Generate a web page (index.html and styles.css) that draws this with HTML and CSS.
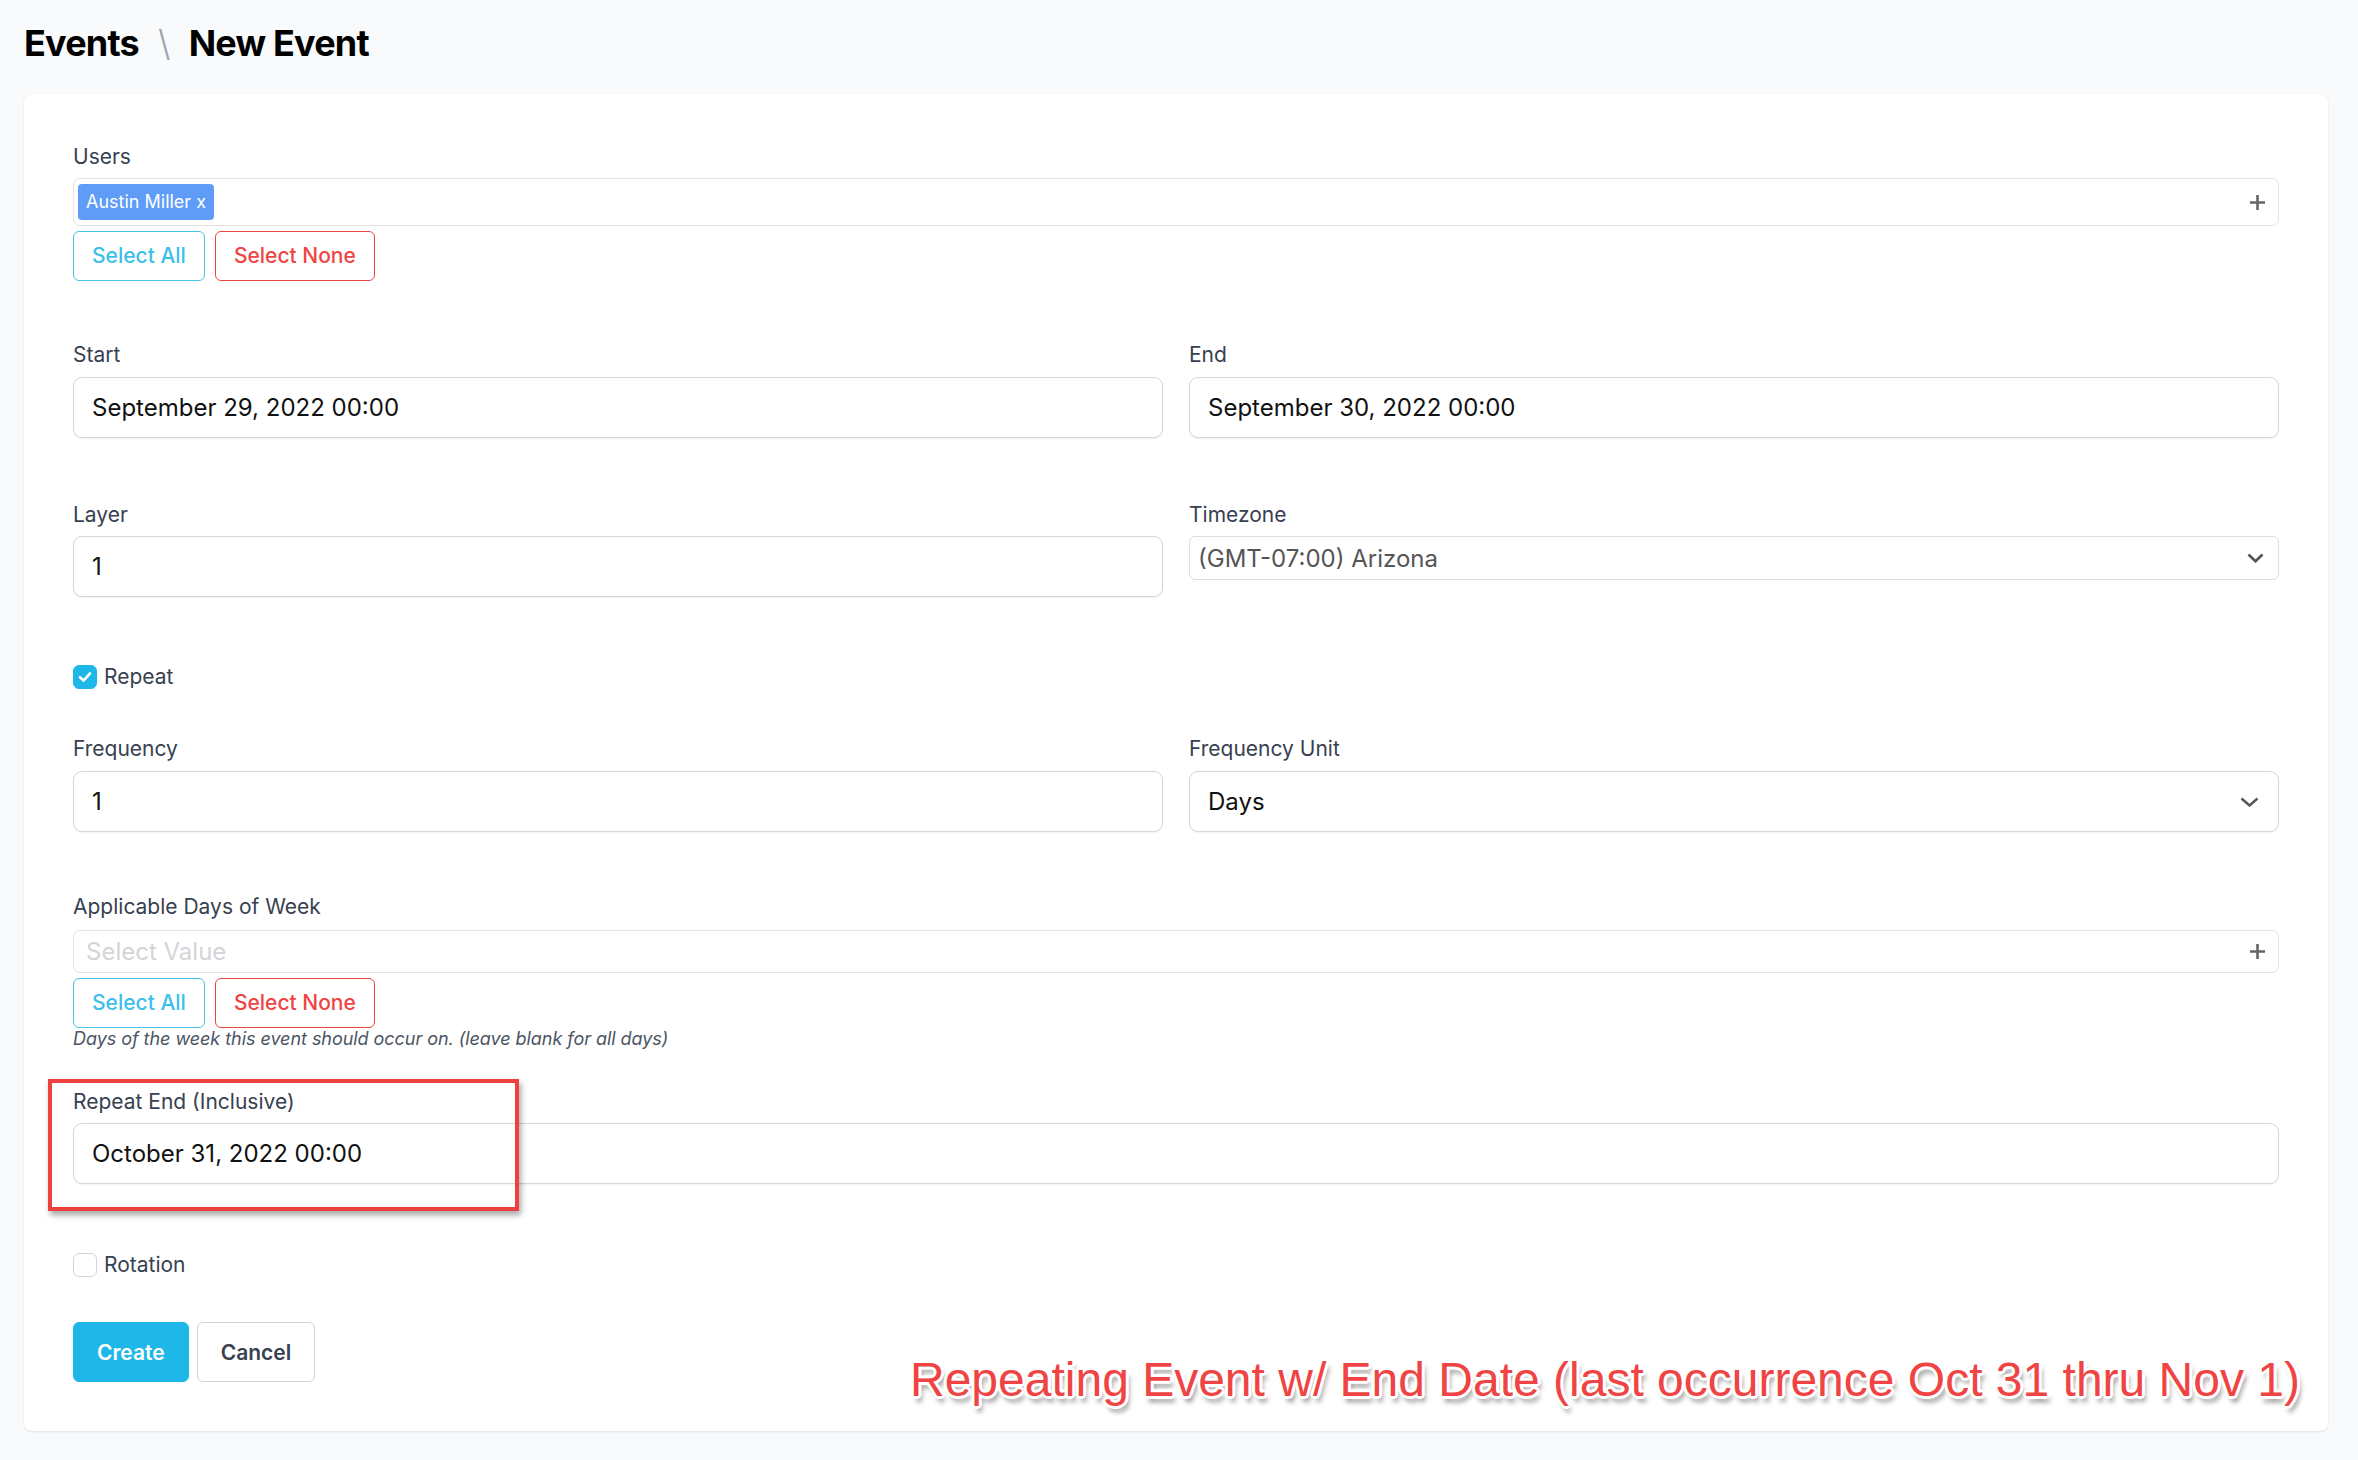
FILE: index.html
```html
<!DOCTYPE html>
<html lang="en">
<head>
<meta charset="utf-8">
<title>New Event</title>
<link rel="stylesheet" href="styles.css">
</head>
<body>
<div class="page">
  <h1 class="crumbs"><span>Events</span><span class="sep">\</span><span>New Event</span></h1>
  <div class="card">
    <div class="field users">
      <div class="lbl">Users</div>
      <div class="multi">
        <span class="tag">Austin Miller x</span>
        <svg class="plus" width="15" height="15" viewBox="0 0 15 15"><path d="M7.5 0v15M0 7.5h15" stroke="#666" stroke-width="2.6" fill="none"/></svg>
      </div>
      <div class="btns">
        <button class="obtn cyan">Select All</button>
        <button class="obtn red">Select None</button>
      </div>
    </div>

    <div class="row2 r-start">
      <div class="col">
        <div class="lbl">Start</div>
        <div class="input">September 29, 2022 00:00</div>
      </div>
      <div class="col">
        <div class="lbl">End</div>
        <div class="input">September 30, 2022 00:00</div>
      </div>
    </div>

    <div class="row2 r-layer">
      <div class="col">
        <div class="lbl">Layer</div>
        <div class="input">1</div>
      </div>
      <div class="col">
        <div class="lbl">Timezone</div>
        <div class="tzselect">
          <span>(GMT-07:00) Arizona</span>
          <svg width="17" height="10" viewBox="0 0 17 10"><polyline points="1.5,1.5 8.5,8.3 15.5,1.5" stroke="#555" stroke-width="2.6" fill="none"/></svg>
        </div>
      </div>
    </div>

    <div class="check-row r-repeat">
      <span class="cb on"><svg width="14" height="12" viewBox="0 0 14 12"><polyline points="2,6.2 5.6,9.6 12,2.4" stroke="#fff" stroke-width="2.6" fill="none" stroke-linecap="round" stroke-linejoin="round"/></svg></span>
      <span>Repeat</span>
    </div>

    <div class="row2 r-freq">
      <div class="col">
        <div class="lbl">Frequency</div>
        <div class="input">1</div>
      </div>
      <div class="col">
        <div class="lbl">Frequency Unit</div>
        <div class="input sel">
          <span>Days</span>
          <svg width="19" height="10" viewBox="0 0 19 10"><polyline points="1.5,1.5 9.5,8.5 17.5,1.5" stroke="#555" stroke-width="2.4" fill="none"/></svg>
        </div>
      </div>
    </div>

    <div class="field r-days">
      <div class="lbl">Applicable Days of Week</div>
      <div class="multi days">
        <span class="ph">Select Value</span>
        <svg class="plus" width="15" height="15" viewBox="0 0 15 15"><path d="M7.5 0v15M0 7.5h15" stroke="#666" stroke-width="2.6" fill="none"/></svg>
      </div>
      <div class="btns">
        <button class="obtn cyan">Select All</button>
        <button class="obtn red">Select None</button>
      </div>
      <div class="help">Days of the week this event should occur on. (leave blank for all days)</div>
    </div>

    <div class="field r-end">
      <div class="lbl">Repeat End (Inclusive)</div>
      <div class="input">October 31, 2022 00:00</div>
      <div class="highlight"></div>
    </div>

    <div class="check-row r-rot">
      <span class="cb"></span>
      <span>Rotation</span>
    </div>

    <div class="actions">
      <button class="btn primary">Create</button>
      <button class="btn plain">Cancel</button>
    </div>

    <div class="annotation">Repeating Event w/ End Date (last occurrence Oct 31 thru Nov 1)</div>
  </div>
</div>
</body>
</html>
```

FILE: styles.css
```css
* { box-sizing: border-box; }
html, body { margin: 0; padding: 0; }
body {
  background: #f9fafb;
  font-family: Inter, "Noto Sans", "Liberation Sans", sans-serif;
  color: #111827;
}
.page {
  padding: 16px 30px 29px 24px;
}
.crumbs {
  margin: 0 0 24px 0;
  font-size: 36px;
  line-height: 54px;
  font-weight: 700;
  color: #000;
  letter-spacing: -0.8px;
  display: flex;
  align-items: center;
}
.crumbs .sep {
  font-weight: 300;
  color: #9ca3af;
  margin: 0 19px 0 19px;
}
.card {
  position: relative;
  background: #fff;
  border-radius: 8px;
  box-shadow: 0 1px 3px rgba(0,0,0,0.07), 0 1px 2px rgba(0,0,0,0.04);
  padding: 48px 49px 48px 49px;
  height: 1337px;
}
.lbl {
  font-size: 21px;
  line-height: 30px;
  color: #374151;
  margin-bottom: 6px;
}
.multi {
  height: 48px;
  border: 1px solid #e2e2e2;
  border-radius: 7px;
  display: flex;
  align-items: center;
  justify-content: space-between;
  padding: 0 13px 0 4px;
}
.tag {
  background: #5e9cf8;
  color: #fff;
  font-size: 18px;
  line-height: 28px;
  padding: 4px 8px;
  border-radius: 4px;
}
.multi.days {
  height: 43px;
  padding-left: 12px;
}
.ph {
  font-size: 24px;
  color: #d4d4d8;
}
.btns {
  display: flex;
  gap: 10px;
  margin-top: 5px;
}
.obtn {
  font-family: inherit;
  font-size: 21px;
  font-weight: 500;
  line-height: 30px;
  padding: 9px 18px;
  background: #fff;
  border-radius: 6px;
  border: 1px solid;
}
.obtn.cyan { color: #3dbfe9; border-color: #45c3ec; }
.obtn.red { color: #ef4444; border-color: #ef4444; }

.row2 {
  display: grid;
  grid-template-columns: 1fr 1fr;
  column-gap: 26px;
  align-items: start;
}
.r-start { margin-top: 59px; }
.r-start .lbl { margin-bottom: 7px; }
.r-layer { margin-top: 62px; }
.r-freq { margin-top: 42px; }
.r-freq .lbl { margin-bottom: 7px; }

.input {
  height: 61px;
  border: 1px solid #d4d5db;
  border-radius: 9px;
  box-shadow: 0 1px 2px rgba(0,0,0,0.06);
  padding: 0 18px;
  display: flex;
  align-items: center;
  font-size: 24px;
  color: #111;
}
.input.sel {
  justify-content: space-between;
  padding-right: 19px;
}
.tzselect {
  height: 44px;
  border: 1px solid #dddddd;
  border-radius: 6px;
  padding: 0 14px 0 8px;
  display: flex;
  align-items: center;
  justify-content: space-between;
  font-size: 24px;
  color: #555;
}

.check-row {
  display: flex;
  align-items: center;
  gap: 7px;
  font-size: 21px;
  line-height: 30px;
  color: #374151;
}
.r-repeat { margin-top: 65px; }
.r-rot { margin-top: 66px; }
.cb {
  width: 24px;
  height: 24px;
  border-radius: 6px;
  border: 1px solid #d1d5db;
  background: #fff;
  display: inline-flex;
  align-items: center;
  justify-content: center;
}
.cb.on {
  background: #1fb7e7;
  border-color: #1fb7e7;
}

.r-days { margin-top: 60px; }
.r-days .lbl { margin-bottom: 8px; }
.help {
  margin-top: 1px;
  font-size: 18px;
  line-height: 20px;
  font-style: italic;
  color: #4b5563;
  letter-spacing: -0.05px;
}

.r-end {
  position: relative;
  margin-top: 38px;
}
.highlight {
  position: absolute;
  left: -25px;
  top: -8px;
  width: 471px;
  height: 132px;
  border: 4px solid #ef4040;
  box-shadow: 2px 4px 6px rgba(0,0,0,0.35);
}

.actions {
  display: flex;
  gap: 8px;
  margin-top: 42px;
}
.btn {
  font-family: inherit;
  font-size: 21px;
  font-weight: 600;
  height: 60px;
  padding: 0 23px;
  border-radius: 6px;
  border: 1px solid transparent;
}
.btn.primary {
  background: #1fb7e7;
  color: #fff;
  border-color: #1fb7e7;
}
.btn.plain {
  background: #fff;
  color: #374151;
  border-color: #d1d5db;
}

.annotation {
  position: absolute;
  right: 28px;
  bottom: 24px;
  font-family: "Liberation Sans", Arial, sans-serif;
  font-size: 48px;
  line-height: 55px;
  color: #f04444;
  white-space: nowrap;
  text-shadow:
    -2px -2px 0 #fff, 2px -2px 0 #fff, -2px 2px 0 #fff, 2px 2px 0 #fff,
    0 -3px 0 #fff, 0 3px 0 #fff, -3px 0 0 #fff, 3px 0 0 #fff,
    3px 6px 5px rgba(0,0,0,0.45);
}
```
